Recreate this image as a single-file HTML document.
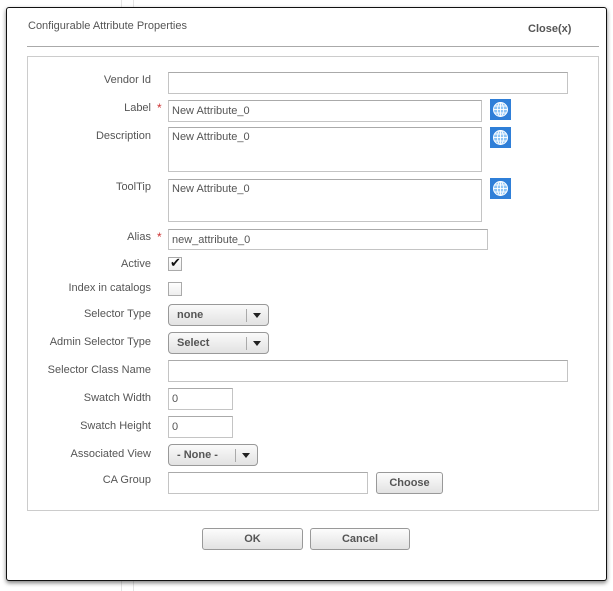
<!DOCTYPE html>
<html><head><style>
*{box-sizing:border-box}
body{margin:0;width:613px;height:591px;background:#fff;position:relative;overflow:hidden;font-family:"Liberation Sans","DejaVu Sans",sans-serif;font-size:11px;color:#555}
.bg1{position:absolute;left:121px;top:0;width:1px;height:591px;background:#e4e4e4}
.bg2{position:absolute;left:133px;top:0;width:1px;height:591px;background:#e4e4e4}
.dlg{position:absolute;left:6px;top:7px;width:601px;height:574px;background:#fff;border:1px solid #111;border-radius:3px;box-shadow:0 2px 4px rgba(0,0,0,.5)}
.a{position:absolute}
.lbl{position:absolute;right:462px;text-align:right;white-space:nowrap}
.in{position:absolute;border:1px solid #c4c4c4;background:#fff;padding:4px 3px 2px;font-size:11px;color:#555;border-top-color:#aaa}
.ta{padding-top:3px}
.star{position:absolute;left:157px;color:#c33;font-size:12px}
.globe{position:absolute;left:490px;width:21px;height:21px;background:#2f7fd8}
.sel{position:absolute;border:1px solid #999;border-radius:4px;background:linear-gradient(#fafafa,#e2e2e2);font-weight:bold;color:#555;padding:4px 8px}
.sel i{position:absolute;right:21px;top:4px;width:1px;height:13px;background:#aaa}
.sel b{position:absolute;right:7px;top:8px;border-left:4px solid transparent;border-right:4px solid transparent;border-top:5px solid #222}
.btn{position:absolute;border:1px solid #999;border-radius:3px;background:linear-gradient(#fcfcfc,#e2e2e2);font-weight:bold;color:#555;text-align:center;line-height:21px}
.cb{position:absolute;left:168px;width:14px;height:14px;border:1px solid #aaa;background:linear-gradient(#fff,#eee)}
</style></head><body>
<div class="bg1"></div><div class="bg2"></div>
<div class="dlg"></div>
<div class="a" style="left:28px;top:20px;color:#555">Configurable Attribute Properties</div>
<div class="a" style="left:528px;top:23px;font-weight:bold;color:#555">Close(x)</div>
<div class="a" style="left:27px;top:46px;width:572px;height:1px;background:#aaa"></div>
<div class="a" style="left:27px;top:56px;width:572px;height:455px;border:1px solid #ccc"></div>

<div class="lbl" style="top:74px">Vendor Id</div>
<div class="in" style="left:168px;top:72px;width:400px;height:22px"></div>

<div class="lbl" style="top:102px">Label</div><div class="star" style="top:101px">*</div>
<div class="in" style="left:168px;top:100px;width:314px;height:22px">New Attribute_0</div>
<svg class="globe" style="top:99px" viewBox="0 0 21 21"><rect width="21" height="21" fill="#2f7fd8"/><circle cx="10.5" cy="10.5" r="7" fill="#8cc4f5" stroke="#fff" stroke-width="1"/><g stroke="#fff" fill="none" stroke-width=".9"><ellipse cx="10.5" cy="10.5" rx="3" ry="7"/><line x1="10.5" y1="3.5" x2="10.5" y2="17.5"/><line x1="3.5" y1="10.5" x2="17.5" y2="10.5"/><line x1="4.5" y1="7" x2="16.5" y2="7"/><line x1="4.5" y1="14" x2="16.5" y2="14"/></g></svg>

<div class="lbl" style="top:130px">Description</div>
<div class="in ta" style="left:168px;top:127px;width:314px;height:45px">New Attribute_0</div>
<svg class="globe" style="top:127px" viewBox="0 0 21 21"><rect width="21" height="21" fill="#2f7fd8"/><circle cx="10.5" cy="10.5" r="7" fill="#8cc4f5" stroke="#fff" stroke-width="1"/><g stroke="#fff" fill="none" stroke-width=".9"><ellipse cx="10.5" cy="10.5" rx="3" ry="7"/><line x1="10.5" y1="3.5" x2="10.5" y2="17.5"/><line x1="3.5" y1="10.5" x2="17.5" y2="10.5"/><line x1="4.5" y1="7" x2="16.5" y2="7"/><line x1="4.5" y1="14" x2="16.5" y2="14"/></g></svg>

<div class="lbl" style="top:181px">ToolTip</div>
<div class="in ta" style="left:168px;top:179px;width:314px;height:43px">New Attribute_0</div>
<svg class="globe" style="top:178px" viewBox="0 0 21 21"><rect width="21" height="21" fill="#2f7fd8"/><circle cx="10.5" cy="10.5" r="7" fill="#8cc4f5" stroke="#fff" stroke-width="1"/><g stroke="#fff" fill="none" stroke-width=".9"><ellipse cx="10.5" cy="10.5" rx="3" ry="7"/><line x1="10.5" y1="3.5" x2="10.5" y2="17.5"/><line x1="3.5" y1="10.5" x2="17.5" y2="10.5"/><line x1="4.5" y1="7" x2="16.5" y2="7"/><line x1="4.5" y1="14" x2="16.5" y2="14"/></g></svg>

<div class="lbl" style="top:231px">Alias</div><div class="star" style="top:230px">*</div>
<div class="in" style="left:168px;top:229px;width:320px;height:21px">new_attribute_0</div>

<div class="lbl" style="top:258px">Active</div>
<div class="cb" style="top:257px"><span style="position:absolute;left:1px;top:-3px;font-size:13px;color:#111">✔</span></div>
<div class="lbl" style="top:282px">Index in catalogs</div>
<div class="cb" style="top:282px"></div>

<div class="lbl" style="top:308px">Selector Type</div>
<div class="sel" style="left:168px;top:304px;width:101px;height:22px">none<i></i><b></b></div>
<div class="lbl" style="top:336px">Admin Selector Type</div>
<div class="sel" style="left:168px;top:332px;width:101px;height:22px">Select<i></i><b></b></div>

<div class="lbl" style="top:364px">Selector Class Name</div>
<div class="in" style="left:168px;top:360px;width:400px;height:22px"></div>
<div class="lbl" style="top:392px">Swatch Width</div>
<div class="in" style="left:168px;top:388px;width:65px;height:22px">0</div>
<div class="lbl" style="top:420px">Swatch Height</div>
<div class="in" style="left:168px;top:416px;width:65px;height:22px">0</div>

<div class="lbl" style="top:448px">Associated View</div>
<div class="sel" style="left:168px;top:444px;width:90px;height:22px">- None -<i></i><b></b></div>

<div class="lbl" style="top:474px">CA Group</div>
<div class="in" style="left:168px;top:472px;width:200px;height:22px"></div>
<div class="btn" style="left:376px;top:472px;width:67px;height:22px">Choose</div>

<div class="btn" style="left:202px;top:528px;width:101px;height:22px">OK</div>
<div class="btn" style="left:310px;top:528px;width:100px;height:22px">Cancel</div>
</body></html>
